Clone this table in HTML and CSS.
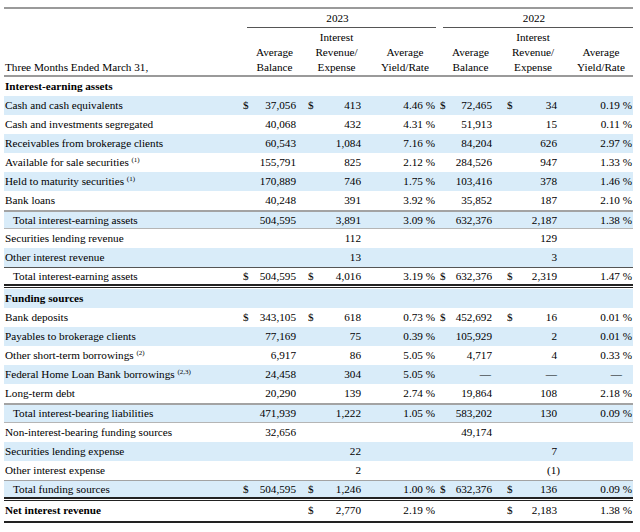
FILE: index.html
```
<!DOCTYPE html>
<html>
<head>
<meta charset="utf-8">
<link rel="stylesheet" href="styles.css">
</head>
<body>
<div class="tbl">
  <div class="row yrs">
    <div class="cell"></div>
    <div class="yr y23">2023</div>
    <div class="yr y22">2022</div>
  </div>
  <div class="row hdr">
    <div class="cell lbl">Three Months Ended March 31,</div>
    <div class="hc">Average<br>Balance</div>
    <div class="hc">Interest<br>Revenue/<br>Expense</div>
    <div class="hc">Average<br>Yield/Rate</div>
    <div class="hc">Average<br>Balance</div>
    <div class="hc">Interest<br>Revenue/<br>Expense</div>
    <div class="hc">Average<br>Yield/Rate</div>
  </div>

  <div class="row sec"><div class="cell lbl b">Interest-earning assets</div></div>

  <div class="row blue">
    <div class="cell lbl">Cash and cash equivalents</div>
    <div class="cell c1 m"><span>$</span><span>37,056</span></div>
    <div class="cell c2 m"><span>$</span><span>413</span></div>
    <div class="cell c3">4.46 %</div>
    <div class="cell c4 m"><span>$</span><span>72,465</span></div>
    <div class="cell c5 m"><span>$</span><span>34</span></div>
    <div class="cell c6">0.19 %</div>
  </div>
  <div class="row">
    <div class="cell lbl">Cash and investments segregated</div>
    <div class="cell c1">40,068</div>
    <div class="cell c2">432</div>
    <div class="cell c3">4.31 %</div>
    <div class="cell c4">51,913</div>
    <div class="cell c5">15</div>
    <div class="cell c6">0.11 %</div>
  </div>
  <div class="row blue">
    <div class="cell lbl">Receivables from brokerage clients</div>
    <div class="cell c1">60,543</div>
    <div class="cell c2">1,084</div>
    <div class="cell c3">7.16 %</div>
    <div class="cell c4">84,204</div>
    <div class="cell c5">626</div>
    <div class="cell c6">2.97 %</div>
  </div>
  <div class="row">
    <div class="cell lbl">Available for sale securities <sup>(1)</sup></div>
    <div class="cell c1">155,791</div>
    <div class="cell c2">825</div>
    <div class="cell c3">2.12 %</div>
    <div class="cell c4">284,526</div>
    <div class="cell c5">947</div>
    <div class="cell c6">1.33 %</div>
  </div>
  <div class="row blue">
    <div class="cell lbl">Held to maturity securities <sup>(1)</sup></div>
    <div class="cell c1">170,889</div>
    <div class="cell c2">746</div>
    <div class="cell c3">1.75 %</div>
    <div class="cell c4">103,416</div>
    <div class="cell c5">378</div>
    <div class="cell c6">1.46 %</div>
  </div>
  <div class="row">
    <div class="cell lbl">Bank loans</div>
    <div class="cell c1">40,248</div>
    <div class="cell c2">391</div>
    <div class="cell c3">3.92 %</div>
    <div class="cell c4">35,852</div>
    <div class="cell c5">187</div>
    <div class="cell c6">2.10 %</div>
  </div>
  <div class="row blue sub">
    <div class="cell lbl ind">Total interest-earning assets</div>
    <div class="cell c1">504,595</div>
    <div class="cell c2">3,891</div>
    <div class="cell c3">3.09 %</div>
    <div class="cell c4">632,376</div>
    <div class="cell c5">2,187</div>
    <div class="cell c6">1.38 %</div>
  </div>
  <div class="row">
    <div class="cell lbl">Securities lending revenue</div>
    <div class="cell c1"></div>
    <div class="cell c2">112</div>
    <div class="cell c3"></div>
    <div class="cell c4"></div>
    <div class="cell c5">129</div>
    <div class="cell c6"></div>
  </div>
  <div class="row blue">
    <div class="cell lbl">Other interest revenue</div>
    <div class="cell c1"></div>
    <div class="cell c2">13</div>
    <div class="cell c3"></div>
    <div class="cell c4"></div>
    <div class="cell c5">3</div>
    <div class="cell c6"></div>
  </div>
  <div class="row grand">
    <div class="cell lbl ind">Total interest-earning assets</div>
    <div class="cell c1 m"><span>$</span><span>504,595</span></div>
    <div class="cell c2 m"><span>$</span><span>4,016</span></div>
    <div class="cell c3">3.19 %</div>
    <div class="cell c4 m"><span>$</span><span>632,376</span></div>
    <div class="cell c5 m"><span>$</span><span>2,319</span></div>
    <div class="cell c6">1.47 %</div>
  </div>

  <div class="row blue"><div class="cell lbl b">Funding sources</div></div>

  <div class="row">
    <div class="cell lbl">Bank deposits</div>
    <div class="cell c1 m"><span>$</span><span>343,105</span></div>
    <div class="cell c2 m"><span>$</span><span>618</span></div>
    <div class="cell c3">0.73 %</div>
    <div class="cell c4 m"><span>$</span><span>452,692</span></div>
    <div class="cell c5 m"><span>$</span><span>16</span></div>
    <div class="cell c6">0.01 %</div>
  </div>
  <div class="row blue">
    <div class="cell lbl">Payables to brokerage clients</div>
    <div class="cell c1">77,169</div>
    <div class="cell c2">75</div>
    <div class="cell c3">0.39 %</div>
    <div class="cell c4">105,929</div>
    <div class="cell c5">2</div>
    <div class="cell c6">0.01 %</div>
  </div>
  <div class="row">
    <div class="cell lbl">Other short-term borrowings <sup>(2)</sup></div>
    <div class="cell c1">6,917</div>
    <div class="cell c2">86</div>
    <div class="cell c3">5.05 %</div>
    <div class="cell c4">4,717</div>
    <div class="cell c5">4</div>
    <div class="cell c6">0.33 %</div>
  </div>
  <div class="row blue">
    <div class="cell lbl">Federal Home Loan Bank borrowings <sup>(2,3)</sup></div>
    <div class="cell c1">24,458</div>
    <div class="cell c2">304</div>
    <div class="cell c3">5.05 %</div>
    <div class="cell c4 dash">—</div>
    <div class="cell c5">—</div>
    <div class="cell c6 dash">—</div>
  </div>
  <div class="row">
    <div class="cell lbl">Long-term debt</div>
    <div class="cell c1">20,290</div>
    <div class="cell c2">139</div>
    <div class="cell c3">2.74 %</div>
    <div class="cell c4">19,864</div>
    <div class="cell c5">108</div>
    <div class="cell c6">2.18 %</div>
  </div>
  <div class="row blue sub tall">
    <div class="cell lbl ind">Total interest-bearing liabilities</div>
    <div class="cell c1">471,939</div>
    <div class="cell c2">1,222</div>
    <div class="cell c3">1.05 %</div>
    <div class="cell c4">583,202</div>
    <div class="cell c5">130</div>
    <div class="cell c6">0.09 %</div>
  </div>
  <div class="row">
    <div class="cell lbl">Non-interest-bearing funding sources</div>
    <div class="cell c1">32,656</div>
    <div class="cell c2"></div>
    <div class="cell c3"></div>
    <div class="cell c4">49,174</div>
    <div class="cell c5"></div>
    <div class="cell c6"></div>
  </div>
  <div class="row blue">
    <div class="cell lbl">Securities lending expense</div>
    <div class="cell c1"></div>
    <div class="cell c2">22</div>
    <div class="cell c3"></div>
    <div class="cell c4"></div>
    <div class="cell c5">7</div>
    <div class="cell c6"></div>
  </div>
  <div class="row">
    <div class="cell lbl">Other interest expense</div>
    <div class="cell c1"></div>
    <div class="cell c2">2</div>
    <div class="cell c3"></div>
    <div class="cell c4"></div>
    <div class="cell c5 paren">(1)</div>
    <div class="cell c6"></div>
  </div>
  <div class="row blue sub2">
    <div class="cell lbl ind">Total funding sources</div>
    <div class="cell c1 m"><span>$</span><span>504,595</span></div>
    <div class="cell c2 m"><span>$</span><span>1,246</span></div>
    <div class="cell c3">1.00 %</div>
    <div class="cell c4 m"><span>$</span><span>632,376</span></div>
    <div class="cell c5 m"><span>$</span><span>136</span></div>
    <div class="cell c6">0.09 %</div>
  </div>
  <div class="row net">
    <div class="cell lbl b">Net interest revenue</div>
    <div class="cell c1"></div>
    <div class="cell c2 m"><span>$</span><span>2,770</span></div>
    <div class="cell c3">2.19 %</div>
    <div class="cell c4"></div>
    <div class="cell c5 m"><span>$</span><span>2,183</span></div>
    <div class="cell c6">1.38 %</div>
  </div>
</div>
</body>
</html>
```
FILE: styles.css
```
* { box-sizing: border-box; }
html, body { margin: 0; padding: 0; background: #fff; }
body {
  font-family: "Liberation Serif", "Times New Roman", serif;
  font-size: 11.2px;
  color: #000;
}
.tbl {
  margin: 7px 0 0 4px;
  width: 629px;
  border-top: 2px solid #9a9a9a;
}
.row {
  display: grid;
  grid-template-columns: 238px 58px 66px 71px 60px 65px 71px;
  height: 19px;
  line-height: 19px;
  white-space: nowrap;
}
.blue { background: #d9ecf9; }
.cell { text-align: right; }
.lbl { text-align: left; padding-left: 1px; }
.ind { padding-left: 9px; }
.b { font-weight: bold; }
.m { display: flex; justify-content: space-between; }
.c1 { padding: 0 4px 0 1px; }
.c2 { padding: 0 5px 0 8px; }
.c3 { padding: 0 2px 0 0; }
.c4 { padding: 0 5px 0 3px; }
.c5 { padding: 0 5px 0 10px; }
.c6 { padding: 0 1px 0 0; }
.dash { padding-right: 6px; }
.c6.dash { padding-right: 11px; }
.paren { padding-right: 2px; }
sup {
  font-size: 7px;
  line-height: 0;
  vertical-align: 4px;
}

.yrs { height: 19px; line-height: 18px; }
.yr {
  text-align: center;
  border-bottom: 1px solid #555;
  grid-column: span 3;
  padding-right: 8px;
}
.y23 { margin: 0 1px 0 5px; }
.y22 { margin: 0 0 0 6px; }

.hdr {
  height: 49px;
  line-height: 15px;
  padding-top: 2px;
  border-bottom: 2px solid #9a9a9a;
  align-items: end;
}
.hc { text-align: center; padding-left: 7px; }

.sub {
  border-top: 2px solid #a3a3a3;
  border-bottom: 1px solid #b5b5b5;
  line-height: 16px;
}
.sub.tall { height: 20px; line-height: 17px; }
.grand {
  border-top: 1px solid #555;
  border-bottom: 2px solid #222;
  line-height: 16px;
  margin-bottom: 3px;
  box-shadow: 0 1px 0 #fff, 0 2px 0 #222;
}
.sub2 {
  border-top: 1px solid #a3a3a3;
  border-bottom: 2px solid #222;
  line-height: 16px;
  margin-bottom: 3px;
  box-shadow: 0 1px 0 #fff, 0 2px 0 #222;
}
.net {
  height: 21px;
  border-bottom: 2px solid #222;
  line-height: 17px;
  box-shadow: 0 1px 0 #fff, 0 2px 0 #222;
}
```
